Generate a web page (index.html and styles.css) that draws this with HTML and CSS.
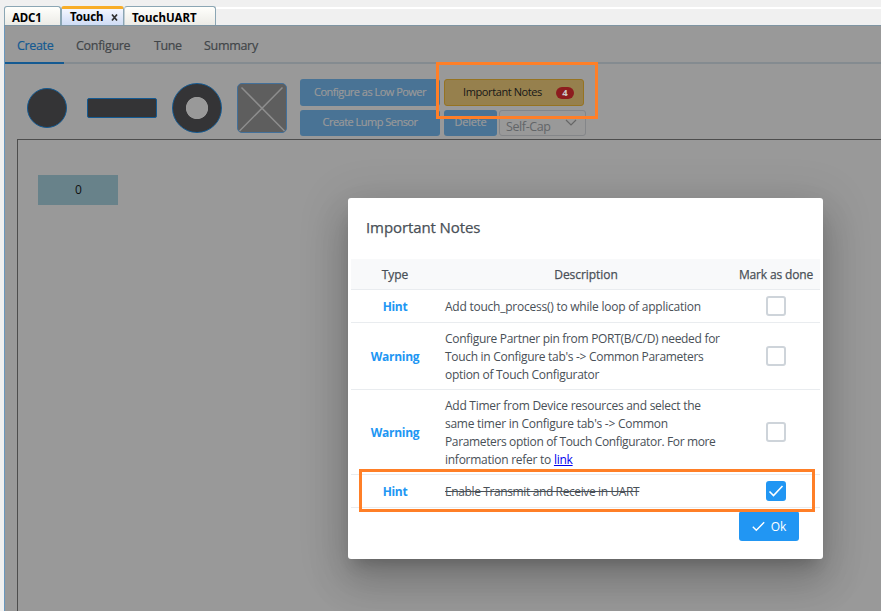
FILE: index.html
```html
<!DOCTYPE html>
<html lang="en">
<head>
<meta charset="utf-8">
<title>Touch Configurator</title>
<link rel="stylesheet" href="styles.css">
</head>
<body>
<div class="tabs">
  <div class="tab tab-adc"><span>ADC1</span></div>
  <div class="tab active"><span>Touch</span><svg class="close" width="7" height="7" viewBox="0 0 7 7"><path d="M1 .5L6 6.5M6 .5L1 6.5" stroke="#333" stroke-width="1.7"/></svg></div>
  <div class="tab tab-uart"><span>TouchUART</span></div>
  <div class="tab-rest"></div>
</div>
<main class="app">
  <nav class="menu">
    <a class="selected"><span class="w-create">Create</span></a><a><span class="w-conf">Configure</span></a><a><span class="w-tune">Tune</span></a><a><span class="w-sum">Summary</span></a>
  </nav>
  <div class="toolbar">
    <div class="shape circle"></div>
    <div class="shape bar"></div>
    <div class="shape ring"></div>
    <svg class="surface" width="50" height="50" viewBox="0 0 50 50"><rect x=".5" y=".5" width="49" height="49" rx="4.5" fill="#5e5e5e" stroke="#43709a"/><path d="M4.5 4.5L47.5 48M45.5 4.5L2.5 48" stroke="#8d8d8d" stroke-width="1.5"/></svg>
    <div class="actions">
      <div class="line">
        <button class="btn wide"><span>Configure as Low Power</span></button>
        <button class="btn notes"><span>Important Notes</span><b class="badge">4</b></button>
      </div>
      <div class="line second">
        <button class="btn wide"><span class="lump">Create Lump Sensor</span></button>
        <button class="btn delete"><span>Delete</span></button>
        <div class="select"><span>Self-Cap</span><svg width="12" height="8" viewBox="0 0 12 8"><path d="M1 1L6 6L11 1" fill="none" stroke="#666" stroke-width="1.2"/></svg></div>
      </div>
    </div>
  </div>
  <section class="canvas"><div class="sensor">0</div></section>
</main>

<div class="dialog">
  <h1><span>Important Notes</span></h1>
  <div class="row head"><div class="type">Type</div><div class="desc">Description</div><div class="done">Mark as done</div></div>
  <div class="row r1"><div class="type hint">Hint</div><div class="desc"><span>Add touch_process() to while loop of application</span></div><div class="done"><i class="check"></i></div></div>
  <div class="row r2"><div class="type">Warning</div><div class="desc"><span>Configure Partner pin from PORT(B/C/D) needed for<br>Touch in Configure tab's -&gt; Common Parameters<br>option of Touch Configurator</span></div><div class="done"><i class="check"></i></div></div>
  <div class="row r3"><div class="type">Warning</div><div class="desc"><span>Add Timer from Device resources and select the<br>same timer in Configure tab's -&gt; Common<br><span class="tight">Parameters option of Touch Configurator. For more</span><br>information refer to <a href="#">link</a></span></div><div class="done"><i class="check"></i></div></div>
  <div class="row r4"><div class="type hint">Hint</div><div class="desc"><s>Enable Transmit and Receive in UART</s></div><div class="done"><i class="check checked"><svg width="16" height="14" viewBox="0 0 16 14"><path d="M1.5 7.5L5.5 11.5L14.5 2" fill="none" stroke="#fff" stroke-width="1.6"/></svg></i></div></div>
  <div class="footer"><button class="ok"><svg width="13" height="11" viewBox="0 0 13 11"><path d="M.8 5.8L4.3 9.2L12.2 1.2" fill="none" stroke="#fff" stroke-width="1.4"/></svg><span>Ok</span></button></div>
</div>
<div class="mark mark-button"></div>
<div class="mark mark-row"></div>
</body>
</html>
```

FILE: styles.css
```css
* { box-sizing: border-box; }
body { margin: 0; width: 881px; height: 611px; overflow: hidden; position: relative; background: #f0f0f0; font: 12px/18px "Open Sans", "Noto Sans", sans-serif; color: #495057; }
button { font: inherit; padding: 0; margin: 0; }
span, s { white-space: nowrap; }

.tabs { height: 25px; padding: 6px 0 0 4px; display: flex; }
.tab { height: 19px; border: 1px solid #8ba6b4; border-bottom: 0; border-left-color: #c2cdd2; border-radius: 3px 3px 0 0; background: linear-gradient(#fffffc, #ecebe6); font: bold 11.5px/21px "Noto Sans", sans-serif; color: #000; padding-left: 7px; }
.tab-adc { width: 57px; border-left-color: #8ba6b4; letter-spacing: -.2px; }
.active { width: 63px; padding-left: 8px; display: flex; align-items: center; border-top: 3px solid #ffb52b; border-color: #8ba6b4; border-top-color: #f8ad27; background: linear-gradient(#f3f6ff, #cfdcf5); line-height: 14px; letter-spacing: -.1px; }
.close { margin: 0 0 0 8px; }
.tab-uart { width: 92px; padding-left: 7px; }
.tab-rest { flex: 1; margin-top: 1px; border-top: 2px solid #fff; }

.app { margin-left: 4px; height: 586px; background: #999; border-left: 1px solid #6997bd; border-top: 1px solid #7f95a3; }
.menu { height: 38px; display: flex; border-bottom: 2px solid #848b90; font-size: 12.5px; line-height: 39px; color: #424649; -webkit-text-stroke: .2px; }
.menu a { padding: 0 12px; height: 38px; }
.menu .selected { width: 59px; color: #145a92; border-bottom: 2px solid #145a92; }
.menu span { display: block; }
.w-create { width: 35px; letter-spacing: -.35px; }
.w-conf { width: 54px; letter-spacing: -.3px; }
.w-tune { width: 26px; letter-spacing: -.4px; }
.w-sum { letter-spacing: -.5px; }
.w-sum { letter-spacing: -.3px; }

.toolbar { height: 75px; padding: 15px 0 0 22px; display: flex; align-items: flex-start; }
.shape { background: #343436; border: 1px solid #145a92; }
.circle { width: 40px; height: 40px; border-radius: 50%; margin-top: 9px; }
.bar { width: 70px; height: 20px; border-radius: 2px; margin: 19px 0 0 20px; }
.ring { width: 50px; height: 50px; border-radius: 50%; margin: 4px 0 0 15px; background: radial-gradient(circle, #999 10.7px, #343436 11.5px); }
.surface { margin: 4px 0 0 15px; }
.actions { margin-left: 13px; }
.line { display: flex; height: 27px; gap: 4px; }
.second { margin-top: 4px; height: 26px; }
.btn { display: flex; align-items: center; justify-content: center; height: 100%; border: 0; border-radius: 3px; background: #497395; color: #999; font-size: 11px; letter-spacing: -.52px; -webkit-text-stroke: .2px; }
.btn span { position: relative; top: -1px; }
.wide { width: 140px; }
.notes { width: 140px; background: #96804d; border: 1px solid #967321; color: #171717; padding-left: 9px; -webkit-text-stroke: 0; }
.notes span { letter-spacing: -.4px; }
.badge { width: 18px; height: 12px; border-radius: 6px; background: #8d1c1e; color: #ccc; font-size: 9.5px; line-height: 12px; margin-left: 14px; letter-spacing: 0; }
.delete { width: 53px; }
.delete span { letter-spacing: -.2px; }
.select { width: 87px; margin-left: -2px; border: 1px solid #848689; border-radius: 3px; display: flex; justify-content: space-between; padding: 7px 8px 0 6px; color: #626568; font-size: 12.5px; letter-spacing: -.4px; }
.select svg { margin-top: 1px; }
.canvas { margin-left: 12px; height: 480px; border: 1px solid #4d4d4d; border-width: 1px 0 0 1px; padding: 35px 0 0 20px; }
.sensor { width: 80px; height: 30px; background: #68828a; color: #111; text-align: center; line-height: 30px; padding-left: 1px; }

.dialog { position: absolute; left: 348px; top: 198px; width: 475px; height: 361px; padding: 0 3px; background: #fff; border-radius: 3px; box-shadow: 0 11px 15px -7px rgba(0,0,0,.2), 0 24px 38px 3px rgba(0,0,0,.14), 0 9px 46px 8px rgba(0,0,0,.12); }
h1 { margin: 0; height: 61px; padding: 0 15px; font-size: 15px; line-height: 59px; font-weight: 500; letter-spacing: -.1px; -webkit-text-stroke: .25px; }
.row { display: grid; grid-template-columns: 88px 294px 86px; align-items: center; border-bottom: 1px solid #e9ecef; }
.head { height: 31px; background: #f8f9fa; font-weight: 500; -webkit-text-stroke: .25px; }
.r1, .r4 { height: 33px; }
.r2 { height: 67px; }
.r3 { height: 85px; }
.type, .done { text-align: center; }
.type, .desc, .head .done { padding-top: 2px; }
.desc { padding-left: 6px; letter-spacing: -.24px; }
.r2 .desc { letter-spacing: -.3px; }
.r3 .desc { letter-spacing: -.26px; }
.r3 .tight { letter-spacing: -.36px; }
.r4 .desc { letter-spacing: -.38px; }
.head .desc { text-align: center; padding: 2px 0 0; letter-spacing: -.05px; }
.row:not(.head) .type { color: #2196f3; font-weight: 700; letter-spacing: -.3px; }
.head .done { letter-spacing: -.15px; }
.desc a { color: #00e; }
.check { display: block; width: 20px; height: 20px; margin: 0 auto; border: 2px solid #ced4da; border-radius: 3px; }
.checked { background: #2196f3; border-color: #2196f3; }
.checked svg { display: block; margin-top: 1px; }
.footer { display: flex; justify-content: flex-end; padding: 3px 21px 0 0; }
.ok { width: 60px; height: 30px; border: 0; border-radius: 3px; background: #2196f3; color: #fff; display: flex; align-items: center; justify-content: center; gap: 6px; }
.ok span { padding-top: 2px; }
.mark { position: absolute; border: 3px solid #ff7f27; }
.mark-button { left: 436px; top: 62px; width: 162px; height: 57px; }
.mark-row { left: 359px; top: 469px; width: 456px; height: 43px; }
```
